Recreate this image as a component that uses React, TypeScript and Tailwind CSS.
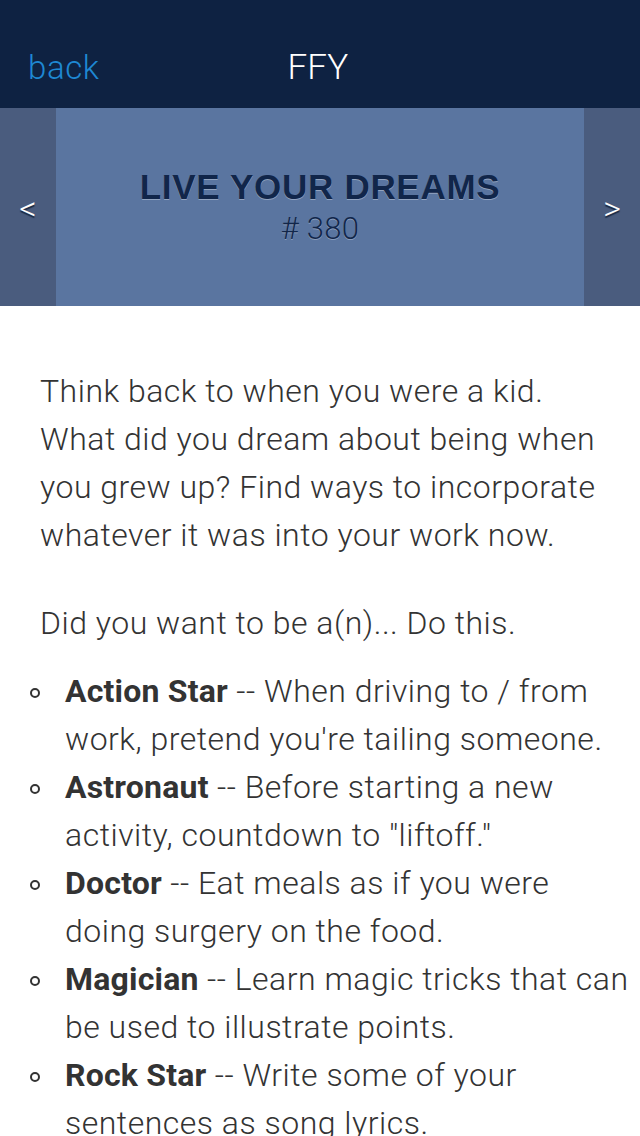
import React from "react";

const items = [
  { b: "Action Star", t: " -- When driving to / from work, pretend you're tailing someone." },
  { b: "Astronaut", t: ' -- Before starting a new activity, countdown to "liftoff."' },
  { b: "Doctor", t: " -- Eat meals as if you were doing surgery on the food." },
  { b: "Magician", t: " -- Learn magic tricks that can be used to illustrate points." },
  { b: "Rock Star", t: " -- Write some of your sentences as song lyrics." },
];

export default function App() {
  const font = { fontFamily: '"Roboto", "Liberation Sans", sans-serif' };
  return (
    <div className="w-[640px] h-[1136px] overflow-hidden bg-white" style={font}>
      <header className="h-[108px] bg-[#0e2242] grid grid-cols-[1fr_auto_1fr] items-end pb-[20px]">
        <span className="pl-[28px] text-[33px] leading-[40px] font-light tracking-[0.6px] text-[#1e88d3]">back</span>
        <span className="text-[35px] leading-[40px] font-light text-white tracking-[0.3px] pr-[4px]">FFY</span>
        <span />
      </header>
      <section className="h-[198px] flex">
        <div className="w-[56px] bg-[#4a5c7e] flex items-center justify-center text-white text-[34px] font-light leading-none pt-[2px] [text-shadow:0_2px_1px_#1a2a44]">&lt;</div>
        <div className="flex-1 bg-[#5a75a0] flex flex-col items-center justify-center text-[#11264a] pt-[2px]">
          <div className="text-[35px] font-bold leading-[42px] tracking-[0.7px] [text-shadow:0_1px_0_rgba(255,255,255,0.35)]" style={{ fontFamily: '"Liberation Sans", sans-serif' }}>LIVE YOUR DREAMS</div>
          <div className="text-[31px] font-light leading-[42px] tracking-[0.3px] [text-shadow:0_1px_0_rgba(255,255,255,0.3)]">#&nbsp;380</div>
        </div>
        <div className="w-[56px] bg-[#4a5c7e] flex items-center justify-center text-white text-[34px] font-light leading-none pt-[2px] [text-shadow:0_2px_1px_#1a2a44]">&gt;</div>
      </section>
      <main className="px-[40px] pt-[61px] text-[#333] text-[32px] font-light leading-[48px] tracking-[0.5px]">
        <p>Think back to when you were a kid. What did you dream about being when you grew up? Find ways to incorporate whatever it was into your work now.</p>
        <p className="mt-[40px]">Did you want to be a(n)... Do this.</p>
        <ul className="mt-[20px] -ml-[10px] -mr-[34px]">
          {items.map((it) => (
            <li key={it.b} className="flex">
              <span className="w-[35px] shrink-0 flex items-start pt-[21px]">
                <span className="block w-[10px] h-[10px] rounded-full border-[2px] border-[#333]" />
              </span>
              <span className="flex-1">
                <b className="font-bold tracking-[0.2px]">{it.b}</b>
                {it.t}
              </span>
            </li>
          ))}
        </ul>
      </main>
    </div>
  );
}
